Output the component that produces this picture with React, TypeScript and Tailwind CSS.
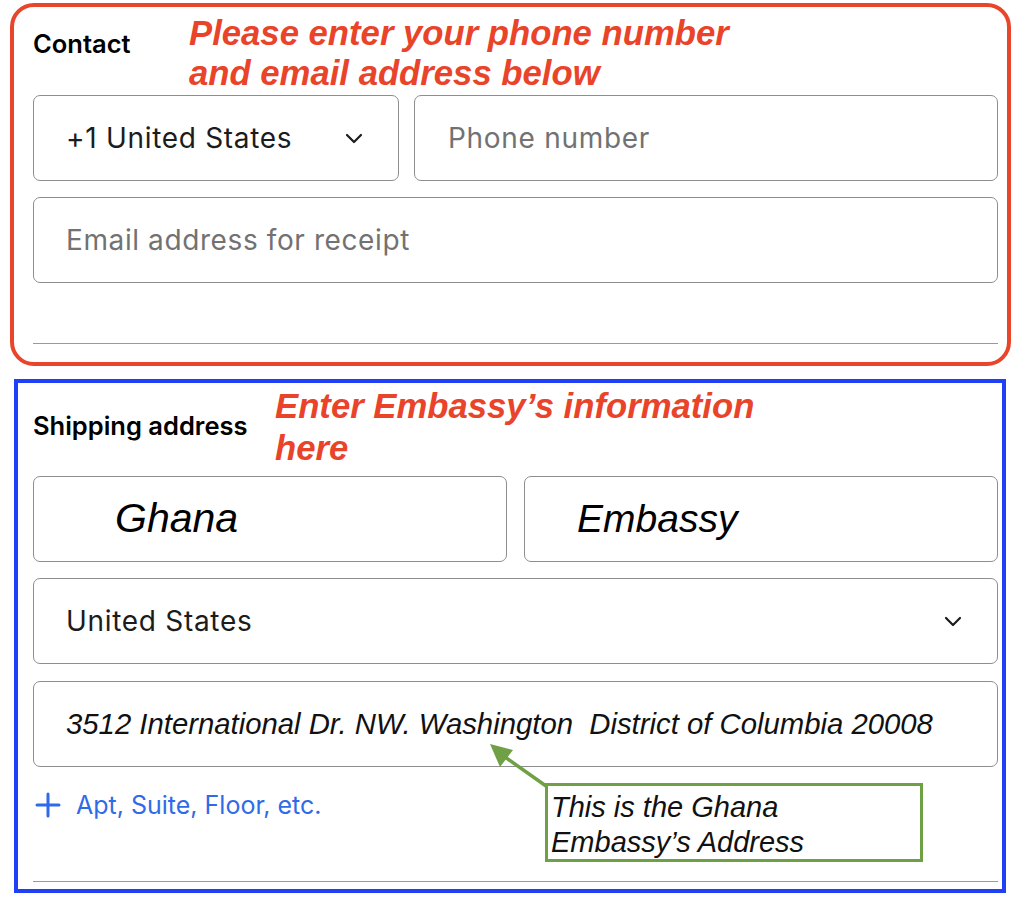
import React from 'react';

const ui = "font-['Inter','Noto_Sans',sans-serif]";
const arial = "font-['Liberation_Sans','Arial',sans-serif]";

const Chevron: React.FC = () => (
  <svg width="18" height="11" viewBox="0 0 18 11" fill="none" className="shrink-0">
    <path d="M2 2l7 7 7-7" stroke="#1c1c1c" strokeWidth="2.2" strokeLinecap="round" strokeLinejoin="round" />
  </svg>
);

const Field: React.FC<{ className?: string; children: React.ReactNode }> = ({ className = '', children }) => (
  <div className={`h-[86px] border-[1.5px] border-[#8e8e8e] rounded-[7px] bg-white flex items-center ${className}`}>
    {children}
  </div>
);

export default function App() {
  return (
    <div className={`relative w-[1024px] h-[905px] bg-white overflow-hidden ${ui}`}>
      {/* Contact section */}
      <div className="ml-[10px] mt-[3px] w-[1001px] h-[363px] border-[4px] border-[#e9452b] rounded-[24px] pl-[19px] pr-[9px] pt-[6px] flex flex-col">
        <div className="flex items-start">
          <div className="w-[156px] shrink-0 mt-[15px] text-[25.5px] leading-[32px] font-semibold text-black">Contact</div>
          <div className={`${arial} italic font-bold text-[34.7px] leading-[40px] text-[#e9442a]`}>
            Please enter your phone number
            <br />
            and email address below
          </div>
        </div>
        <div className="flex gap-[15px] mt-[2px]">
          <Field className="w-[366px] pl-[32px] pr-[35px] justify-between">
            <span className="text-[28px] text-[#1c1c1c] tracking-[0.7px]">+1 United States</span>
            <Chevron />
          </Field>
          <Field className="flex-1 pl-[33px]">
            <span className="text-[28px] text-[#727272] tracking-[0.7px]">Phone number</span>
          </Field>
        </div>
        <Field className="mt-[16px] pl-[32px]">
          <span className="text-[28px] text-[#727272] tracking-[0.6px]">Email address for receipt</span>
        </Field>
        <div className="mt-[60px] h-px bg-[#9a9a9a]" />
      </div>

      {/* Shipping section */}
      <div className="ml-[14px] mt-[13px] w-[992px] h-[514px] border-[4px] border-[#1f40f6] pl-[15px] pr-[4px] pt-[2px] flex flex-col">
        <div className="flex items-start">
          <div className="w-[242px] shrink-0 mt-[25px] text-[25.5px] leading-[32px] font-semibold text-black">Shipping address</div>
          <div className={`${arial} italic font-bold text-[34.7px] leading-[42px] text-[#e9442a]`}>
            Enter Embassy’s information
            <br />
            here
          </div>
        </div>
        <div className="grid grid-cols-2 gap-[17px] mt-[7px]">
          <Field className="pl-[81px]">
            <span className={`${arial} italic text-[41px] text-black`}>Ghana</span>
          </Field>
          <Field className="pl-[52px]">
            <span className={`${arial} italic text-[39px] text-black`}>Embassy</span>
          </Field>
        </div>
        <Field className="mt-[16px] pl-[32px] pr-[35px] justify-between">
          <span className="text-[28px] text-[#1c1c1c] tracking-[0.7px]">United States</span>
          <Chevron />
        </Field>
        <Field className="mt-[17px] pl-[32px]">
          <span className={`${arial} italic text-[29.3px] text-[#111] whitespace-pre`}>
            3512 International Dr. NW. Washington  District of Columbia 20008
          </span>
        </Field>
        <div className="mt-[23px] h-[30px] flex items-center text-[#2f6be8]">
          <svg width="28" height="28" viewBox="0 0 28 28" className="ml-[1px] shrink-0">
            <path d="M14 3v22M3 14h22" stroke="#2f6be8" strokeWidth="3" strokeLinecap="round" />
          </svg>
          <span className="ml-[14px] text-[25px] leading-[30px]">Apt, Suite, Floor, etc.</span>
        </div>
        <div className="mt-[61px] h-px bg-[#9a9a9a]" />
      </div>

      {/* Annotation: arrow + note */}
      <svg className="absolute left-0 top-0 pointer-events-none" width="1024" height="905">
        <line x1="546" y1="786" x2="505" y2="757" stroke="#70a046" strokeWidth="3.5" />
        <polygon points="490,744 513,750 500,767" fill="#70a046" />
      </svg>
      <div className="absolute left-[545px] top-[783px] w-[378px] h-[79px] border-[3px] border-[#70a046] bg-white pl-[3px] pt-[4px]">
        <div className={`${arial} italic text-[29px] leading-[35px] text-[#111]`}>
          This is the Ghana
          <br />
          Embassy’s Address
        </div>
      </div>
    </div>
  );
}
